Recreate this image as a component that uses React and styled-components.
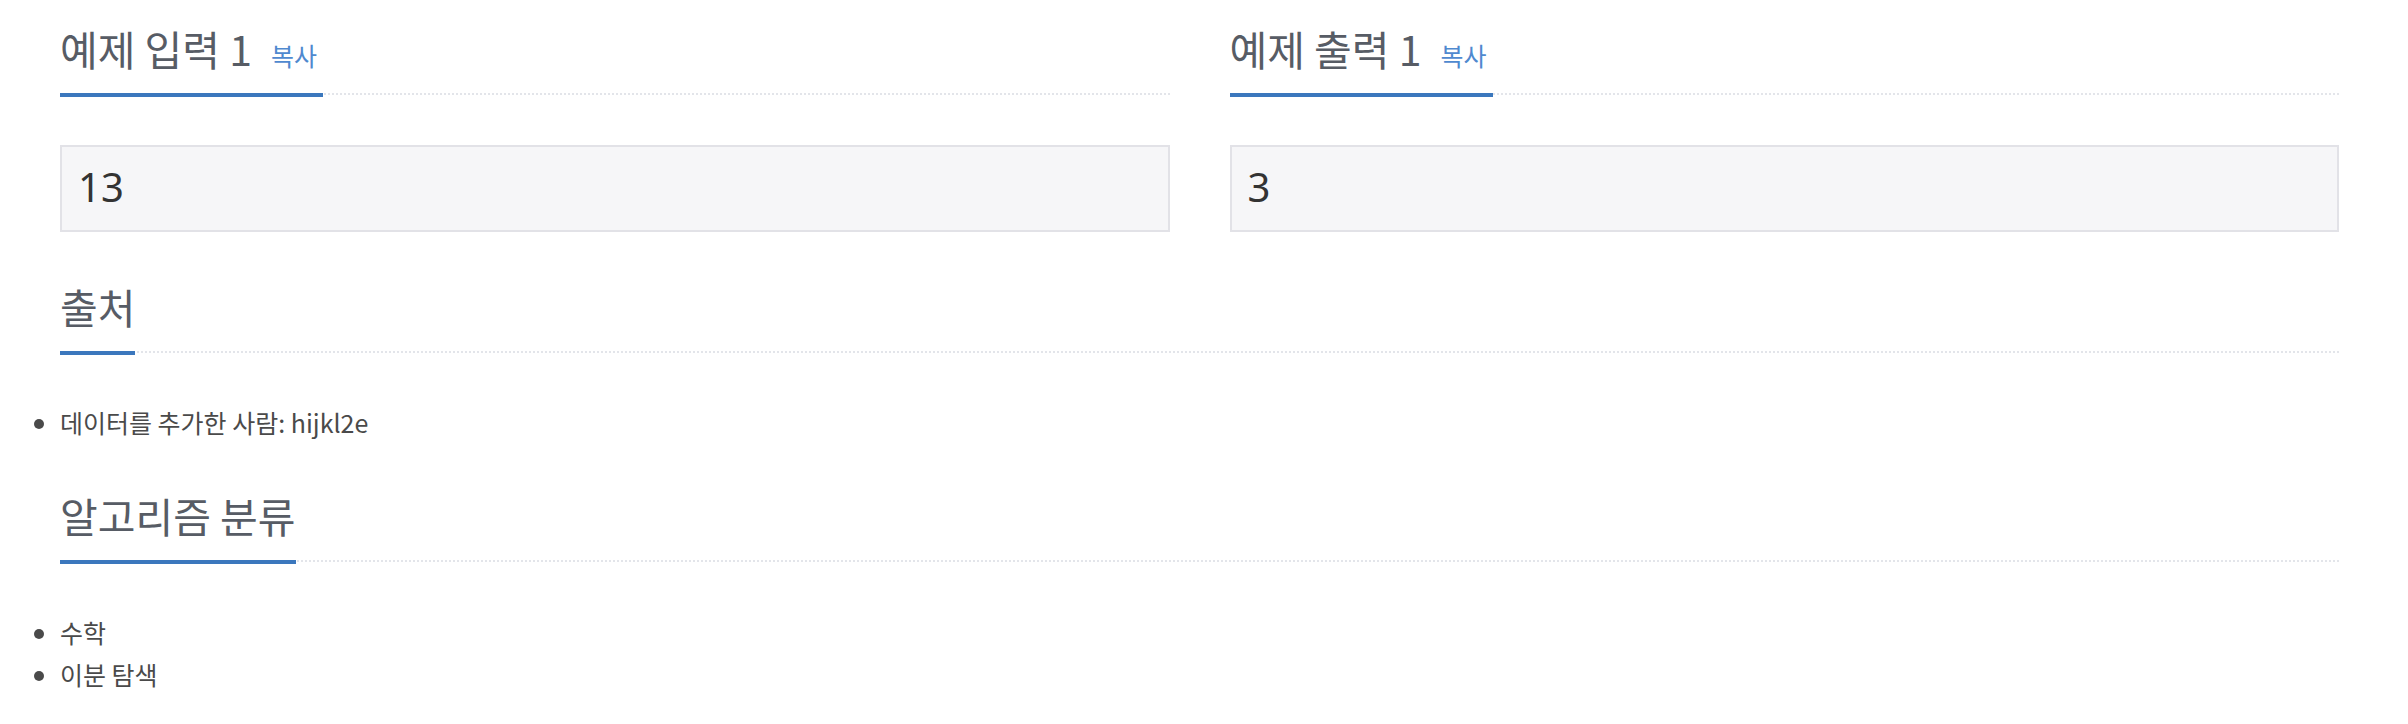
import styled, { createGlobalStyle } from "styled-components";

const GlobalStyle = createGlobalStyle`
  html, body {
    margin: 0;
    padding: 0;
    background: #ffffff;
  }
  body {
    font-family: "Noto Sans CJK KR", "Noto Sans", sans-serif;
  }
`;

const Page = styled.div`
  padding: 0 69px 0 60px;
`;

const SampleRow = styled.div`
  display: grid;
  grid-template-columns: 1fr 1fr;
  column-gap: 60px;
`;

const Section = styled.section`
  margin-top: ${(p) => p.$top}px;
`;

const Headline = styled.div`
  display: flex;
  border-bottom: 2px dotted #e3e5ea;
`;

const Title = styled.h2`
  margin: 0 0 -4px;
  padding-bottom: 16px;
  border-bottom: 4px solid #3b77bd;
  font-size: 41px;
  line-height: 58px;
  font-weight: 400;
  color: #575c65;
  white-space: nowrap;
`;

const CopyLink = styled.a`
  margin-left: 19px;
  padding-right: 6px;
  font-size: 25px;
  line-height: 1;
  color: #4f89cf;
  text-decoration: none;
  cursor: pointer;
`;

const SampleBox = styled.pre`
  margin: 50px 0 0;
  padding: 16px 16px 20px;
  background: #f6f6f8;
  border: 2px solid #e2e2e7;
  font-family: "Noto Sans", "Open Sans", sans-serif;
  font-size: 40px;
  line-height: 47px;
  color: #333333;
`;

const List = styled.ul`
  margin: ${(p) => p.$top}px 0 0;
  padding: 0;
  list-style: disc outside;
  font-size: 25px;
  line-height: 42px;
  color: #4a4a4a;
`;

const samples = [
  { id: "input", label: "예제 입력 1", value: "13" },
  { id: "output", label: "예제 출력 1", value: "3" },
];

export default function App() {
  return (
    <>
      <GlobalStyle />
      <Page>
        <SampleRow>
          {samples.map((s) => (
            <Section key={s.id} $top={19}>
              <Headline>
                <Title>
                  {s.label}
                  <CopyLink>복사</CopyLink>
                </Title>
              </Headline>
              <SampleBox>{s.value}</SampleBox>
            </Section>
          ))}
        </SampleRow>

        <Section $top={45}>
          <Headline>
            <Title>출처</Title>
          </Headline>
          <List $top={48}>
            <li>데이터를 추가한 사람: hijkl2e</li>
          </List>
        </Section>

        <Section $top={43}>
          <Headline>
            <Title>알고리즘 분류</Title>
          </Headline>
          <List $top={49}>
            <li>수학</li>
            <li>이분 탐색</li>
          </List>
        </Section>
      </Page>
    </>
  );
}
